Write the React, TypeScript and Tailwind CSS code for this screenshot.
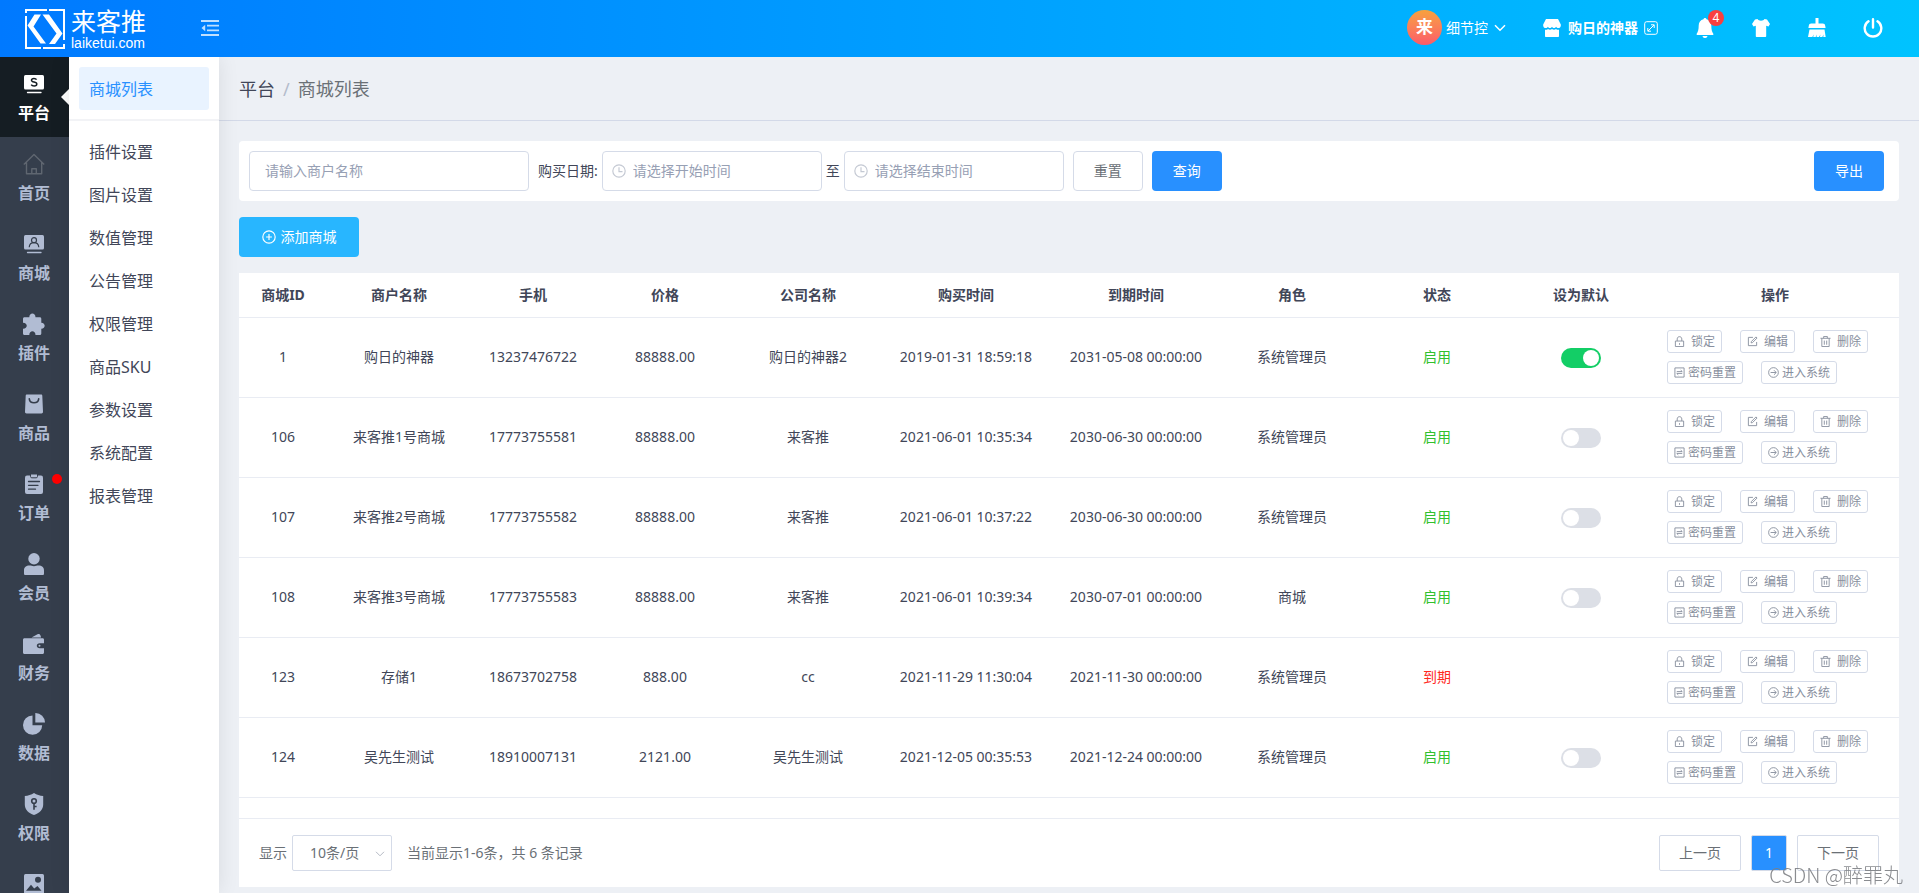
import { useState } from 'react';
import type { ReactNode } from 'react';

type Store = {
  id: number;
  name: string;
  phone: string;
  price: string;
  company: string;
  boughtAt: string;
  expiresAt: string;
  role: string;
  active: boolean;
};

const stores: Store[] = [
  { id: 1, name: '购日的神器', phone: '13237476722', price: '88888.00', company: '购日的神器2', boughtAt: '2019-01-31 18:59:18', expiresAt: '2031-05-08 00:00:00', role: '系统管理员', active: true },
  { id: 106, name: '来客推1号商城', phone: '17773755581', price: '88888.00', company: '来客推', boughtAt: '2021-06-01 10:35:34', expiresAt: '2030-06-30 00:00:00', role: '系统管理员', active: true },
  { id: 107, name: '来客推2号商城', phone: '17773755582', price: '88888.00', company: '来客推', boughtAt: '2021-06-01 10:37:22', expiresAt: '2030-06-30 00:00:00', role: '系统管理员', active: true },
  { id: 108, name: '来客推3号商城', phone: '17773755583', price: '88888.00', company: '来客推', boughtAt: '2021-06-01 10:39:34', expiresAt: '2030-07-01 00:00:00', role: '商城', active: true },
  { id: 123, name: '存储1', phone: '18673702758', price: '888.00', company: 'cc', boughtAt: '2021-11-29 11:30:04', expiresAt: '2021-11-30 00:00:00', role: '系统管理员', active: false },
  { id: 124, name: '吴先生测试', phone: '18910007131', price: '2121.00', company: '吴先生测试', boughtAt: '2021-12-05 00:35:53', expiresAt: '2021-12-24 00:00:00', role: '系统管理员', active: true },
];

const columns = [
  { title: '商城ID', width: 'w-[88px]' },
  { title: '商户名称', width: 'w-[144px]' },
  { title: '手机', width: 'w-[124px]' },
  { title: '价格', width: 'w-[140px]' },
  { title: '公司名称', width: 'w-[146px]' },
  { title: '购买时间', width: 'w-[170px]' },
  { title: '到期时间', width: 'w-[170px]' },
  { title: '角色', width: 'w-[142px]' },
  { title: '状态', width: 'w-[148px]' },
  { title: '设为默认', width: 'w-[140px]' },
  { title: '操作', width: 'w-[248px]' },
];

const subMenu = ['插件设置', '图片设置', '数值管理', '公告管理', '权限管理', '商品SKU', '参数设置', '系统配置', '报表管理'];

// Solid 22px icons of the main menu
const navItems: { label: string; icon: ReactNode; dot?: boolean }[] = [
  {
    label: '平台',
    icon: (
      <>
        <rect x="1" y="2" width="20" height="14.5" rx="1.5" fill="currentColor" />
        <path d="M13.6 6.6c-.5-.8-1.4-1.2-2.6-1.2-1.4 0-2.500.6-2.500 1.800 0 2.600 5.300 1.200 5.300 3.900 0 1.300-1.200 2-2.700 2-1.400 0-2.400-.5-2.900-1.400" fill="none" stroke="#151d23" strokeWidth="1.5" />
        <path d="M4.500 19.500h13.500" stroke="currentColor" strokeWidth="1.300" strokeLinecap="round" />
      </>
    ),
  },
  {
    label: '首页',
    icon: (
      <path
        d="M.8 11.500 11 1.500l10.200 10M3.500 9.500v11.200h15.200V9.500M8.800 20.500v-4.700h4.500v4.700"
        fill="none"
        stroke="#5f6670"
        strokeWidth="1.400"
        strokeLinejoin="round"
      />
    ),
  },
  {
    label: '商城',
    icon: (
      <>
        <rect x="1" y="2" width="20" height="14.500" rx="1.500" fill="currentColor" />
        <circle cx="11" cy="7.200" r="2.500" fill="none" stroke="#353e4c" strokeWidth="1.200" />
        <path d="M6.200 14.300c.2-3 2-4.600 4.800-4.600s4.600 1.600 4.800 4.600" fill="none" stroke="#353e4c" strokeWidth="1.200" />
        <path d="M4.500 19.500h13.500" stroke="currentColor" strokeWidth="1.300" strokeLinecap="round" />
      </>
    ),
  },
  {
    label: '插件',
    icon: (
      <path
        d="M6.300 4.200c0-5 6.200-5 6.200 0h4.300c.9 0 1.500.6 1.500 1.500v4c4.500 0 4.500 6 0 6v4.800c0 .9-.6 1.500-1.500 1.500h-4.300c0-5-6.200-5-6.200 0H1.500C.6 22 0 21.400 0 20.500v-4.800c5 0 5-6 0-6v-4c0-.9.6-1.500 1.500-1.500z"
        fill="currentColor"
      />
    ),
  },
  {
    label: '商品',
    icon: (
      <>
        <path d="M4 1.500h14c.8 0 1.300.5 1.300 1.300l.7 16c0 1-.6 1.700-1.500 1.700h-15c-.9 0-1.500-.7-1.500-1.700l.7-16c0-.8.5-1.300 1.300-1.300z" fill="currentColor" />
        <path d="M6.300 5.800c.5 5.200 8.900 5.200 9.400 0" fill="none" stroke="#353e4c" strokeWidth="1.600" strokeLinecap="round" />
      </>
    ),
  },
  {
    label: '订单',
    dot: true,
    icon: (
      <>
        <rect x="2" y="2.500" width="18" height="18.500" rx="2" fill="currentColor" />
        <path d="M7.500 1h7v2.500c0 .8-.5 1.300-1.300 1.300H8.800c-.8 0-1.300-.5-1.300-1.300z" fill="currentColor" stroke="#353e4c" strokeWidth="1" />
        <path d="M5.500 8.500h11M5.500 12.300h9.500M5.500 16.200h7" stroke="#353e4c" strokeWidth="1.300" strokeLinecap="round" />
      </>
    ),
  },
  {
    label: '会员',
    icon: (
      <>
        <circle cx="11" cy="5.800" r="5.700" fill="currentColor" />
        <path d="M1 20.500v-3c0-3.500 2.200-5 5.500-5 1.500 0 2.800.7 4.500.7s3-.7 4.500-.7c3.300 0 5.500 1.500 5.500 5v3c0 1-.5 1.500-1.500 1.500h-17c-1 0-1.500-.5-1.500-1.500z" fill="currentColor" />
      </>
    ),
  },
  {
    label: '财务',
    icon: (
      <>
        <path d="m8.500 4.500 6-3.200c1.500-.8 2.600 0 3 1.200l.6 2z" fill="currentColor" />
        <path d="M1.500 5.300h18c1 0 1.500.6 1.500 1.500v3.500h-4.200c-4 0-4 5 0 5H21v4.200c0 .9-.6 1.500-1.500 1.500h-18c-.9 0-1.500-.6-1.500-1.500V6.800c0-.9.6-1.500 1.500-1.500z" fill="currentColor" />
        <circle cx="16.500" cy="12.700" r="1" fill="currentColor" />
      </>
    ),
  },
  {
    label: '数据',
    icon: (
      <>
        <path d="M9.500 2.500v9.700h9.700A9.600 9.600 0 1 1 9.500 2.500z" fill="currentColor" />
        <path d="M12.300 0A9.600 9.600 0 0 1 22 9.500h-9.700z" fill="currentColor" />
      </>
    ),
  },
  {
    label: '权限',
    icon: (
      <>
        <path d="M11 0c2.800 1.800 5.800 2.700 9.200 3v8.500c0 5.200-3.600 8.600-9.200 10.500-5.600-1.900-9.200-5.300-9.200-10.500V3C5.200 2.700 8.200 1.800 11 0z" fill="currentColor" />
        <circle cx="11" cy="8" r="2.300" fill="none" stroke="#353e4c" strokeWidth="1.600" />
        <path d="M11 10.300v6.400M11 13.500h2.600" stroke="#353e4c" strokeWidth="1.600" />
      </>
    ),
  },
  {
    label: '图片',
    icon: (
      <>
        <rect x="1" y="1" width="20" height="20" rx="1.500" fill="currentColor" />
        <circle cx="15" cy="6.800" r="3" fill="#353e4c" />
        <path d="m3 17.800 5-6 3.200 3.800 3.300-2.600 4 4.800z" fill="#353e4c" />
      </>
    ),
  },
];

function LineIcon({ children, className = 'size-3' }: { children: ReactNode; className?: string }) {
  return (
    <svg viewBox="0 0 12 12" className={className} fill="none" stroke="currentColor" strokeWidth="1" aria-hidden="true">
      {children}
    </svg>
  );
}

const actions = [
  {
    label: '锁定',
    icon: <path d="M1.500 5.500h9v6h-9zM3.500 5.500V3.200c0-3.300 5-3.300 5 0v2.300M6 7.800v1.800" />,
  },
  {
    label: '编辑',
    icon: <path d="M6.500 1.500h-5v9h9v-4M4.500 7.500l.3-1.500 5-5 1.200 1.200-5 5z" />,
  },
  {
    label: '删除',
    icon: <path d="M.5 2.500h11M4 2.500v-2h4v2M2 2.500v9h8v-9M4.700 5v4.500M7.300 5v4.500" />,
  },
];

const wideActions = [
  {
    label: '密码重置',
    icon: <path d="M1 1h10v10H1zM3 5h6L7.300 3.400M9 7H3l1.700 1.600" />,
  },
  {
    label: '进入系统',
    icon: (
      <>
        <circle cx="6" cy="6" r="5.300" />
        <path d="M2.800 6h6M6.500 3.500 9 6 6.500 8.500" />
      </>
    ),
  },
];

function Header() {
  return (
    <header className="relative z-20 flex h-[57px] shrink-0 items-center justify-between bg-linear-to-r from-[#0079ff] to-[#00c3ff] pr-9 pl-[25px] text-white">
      <div className="flex items-center">
        <svg viewBox="0 0 40 40" className="size-10" aria-hidden="true">
          <path d="M22 1H1v3M1 7v32h15M18 39h21v-4M39 31V1H24" fill="none" stroke="#fff" strokeWidth="2" />
          <path d="M9.500 5.500h6.500L8.500 17.500 21 34.500h-5.500L2.500 16.500z" fill="#fff" />
          <path d="M17.500 5.500H24l13.500 19L30 35h-6l7.500-10.500z" fill="#fff" />
        </svg>
        <div className="ml-1.5 flex flex-col">
          <span className="text-[25px] leading-7">来客推</span>
          <span className="font-['Liberation_Sans',sans-serif] text-[14px] leading-4">laiketui.com</span>
        </div>
        <button type="button" aria-label="收起菜单" className="ml-[55px] pb-0.5 text-white/75">
          <svg viewBox="0 0 18 16" className="h-4 w-[18px]" aria-hidden="true">
            <path d="M0 1h18M6 5.700h12M6 10.300h12M0 15h18" stroke="currentColor" strokeWidth="1.800" />
            <path d="M4.200 4.800v6.400L.5 8z" fill="currentColor" />
          </svg>
        </button>
      </div>

      <div className="flex items-center pb-0.5 text-sm">
        <button type="button" className="flex items-center">
          <span className="flex size-[35px] items-center justify-center rounded-full bg-linear-to-b from-[#f7a13c] to-[#fb5a68] text-[17px] font-bold">来</span>
          <span className="ml-1">细节控</span>
          <svg viewBox="0 0 12 8" className="ml-1.5 h-2 w-3" fill="none" stroke="currentColor" strokeWidth="1.500" aria-hidden="true">
            <path d="m1 1.200 5 5 5-5" />
          </svg>
        </button>
        <a href="#store" className="ml-[37px] flex items-center font-bold">
          <svg viewBox="0 0 18 18" className="size-[18px]" fill="currentColor" aria-hidden="true">
            <path d="M3 0h12l2.800 5.500c.6 4-3.800 4.500-4.700 2.200-.9 1.800-3.300 1.800-4.100 0-.9 1.800-3.300 1.800-4.100 0C4 10-.4 9.500.2 5.500z" />
            <path d="M2 10.800c1.200.2 2.200-.1 3-.8 1.200 1 2.800 1 4 0 1.200 1 2.800 1 4 0 .8.7 1.800 1 3 .8V17c0 .6-.4 1-1 1H3c-.6 0-1-.4-1-1z" />
          </svg>
          <span className="ml-[7px]">购日的神器</span>
          <svg viewBox="0 0 14 14" className="ml-1.5 size-3.5" fill="none" stroke="currentColor" aria-hidden="true">
            <rect x=".7" y=".7" width="12.600" height="12.600" rx="2" />
            <path d="m4 10 6-6M7 3.800h3.200V7M3.800 7v3.200H7" />
          </svg>
        </a>
        <div className="ml-[37px] flex items-center gap-9">
          <button type="button" aria-label="消息" className="relative">
            <svg viewBox="0 0 20 20" className="size-5" fill="currentColor" aria-hidden="true">
              <path d="M10 0c.8 0 1.400.6 1.500 1.300 3 .8 4.800 3 4.800 6.200 0 4 .7 6.500 2 8.200V17H1.700v-1.300c1.300-1.700 2-4.200 2-8.200 0-3.200 1.800-5.400 4.800-6.200C8.600.6 9.200 0 10 0zM7.500 18h5c-.5 2.700-4.500 2.700-5 0z" />
            </svg>
            <span className="absolute -top-2 left-[13px] flex size-4 items-center justify-center rounded-full bg-[#f93f3f] text-xs leading-4">4</span>
          </button>
          <button type="button" aria-label="换肤">
            <svg viewBox="0 0 20 20" className="size-5" fill="currentColor" aria-hidden="true">
              <path d="M6.500 1c1 2.200 6 2.200 7 0L16 1.500l3 4.500-1.500 2.500-2.300-.8V18c0 .6-.4 1-1 1H5.800c-.6 0-1-.4-1-1V7.700l-2.300.8L1 6l3-4.500z" />
            </svg>
          </button>
          <button type="button" aria-label="清除缓存">
            <svg viewBox="0 0 20 20" className="size-5" fill="currentColor" aria-hidden="true">
              <path d="M8.500 0h3v5.500h4.300c1.400 0 2.200.9 2.400 2.200l.4 2.300H1.400l.4-2.300c.2-1.300 1-2.200 2.400-2.200h4.300z" />
              <path d="M2.500 11.500h15l1.200 7.500h-2.400l.2-2.500-1.200 2.500h-2.300l.4-2.500L12 19H9.500l.5-2.500L8.600 19H6.200l.6-2.500L5.300 19H1z" />
            </svg>
          </button>
          <button type="button" aria-label="退出">
            <svg viewBox="0 0 20 20" className="size-5" fill="none" stroke="currentColor" strokeWidth="2.400" strokeLinecap="round" aria-hidden="true">
              <path d="M10 1.200v8.300M5.500 3.300a8.300 8.300 0 1 0 9 0" />
            </svg>
          </button>
        </div>
      </div>
    </header>
  );
}

function MainNav() {
  return (
    <nav className="w-[69px] shrink-0 overflow-hidden bg-[#353e4c]">
      {navItems.map((item, i) => (
        <a
          key={item.label}
          href="#nav"
          className={`relative flex h-20 flex-col items-center pt-4 pr-px text-base font-bold ${i === 0 ? 'bg-[#151d23] text-white' : 'text-[#b1bcd3]'}`}
        >
          <svg viewBox="0 0 22 22" className="size-[22px]" aria-hidden="true">
            {item.icon}
          </svg>
          <span className="mt-1.5 leading-6">{item.label}</span>
          {i === 0 && (
            <svg viewBox="0 0 8 16" className="absolute top-8 right-0 h-4 w-2" aria-hidden="true">
              <path d="M8 0v16L0 8z" fill="#fff" />
            </svg>
          )}
          {item.dot && <span className="absolute top-[17px] left-[52px] size-2.5 rounded-full bg-[#ff0000]" />}
        </a>
      ))}
    </nav>
  );
}

function SubNav() {
  return (
    <nav className="relative z-10 w-[150px] shrink-0 bg-white text-base text-[#414658] shadow-[0_0_20px_rgba(0,0,0,0.09)]">
      <div className="border-b-2 border-[#f2f3f6] px-2.5 pt-2.5 pb-[9px]">
        <a href="#list" className="flex h-[43px] items-center rounded-[3px] bg-[#e9f3ff] px-2.5 text-[#2890ff]">
          商城列表
        </a>
      </div>
      <div className="px-2.5 py-[9px]">
        {subMenu.map((label) => (
          <a key={label} href="#sub" className="flex h-[43px] items-center px-2.5">
            {label}
          </a>
        ))}
      </div>
    </nav>
  );
}

function DateField({ id, placeholder }: { id: string; placeholder: string }) {
  return (
    <div className="relative">
      <LineIcon className="absolute top-[13px] left-[10px] size-[14px] text-[#c4c9d3]">
        <circle cx="6" cy="6" r="5.300" />
        <path d="M6 2.800v3.700h3" />
      </LineIcon>
      <input
        id={id}
        aria-label={placeholder}
        placeholder={placeholder}
        className="h-10 w-[220px] rounded border border-[#d5dbe8] pr-3 pb-0.5 pl-[30px] placeholder:text-[#97a0b4]"
      />
    </div>
  );
}

function SearchBar() {
  return (
    <form className="flex items-center rounded bg-white py-2.5 pr-[15px] pl-2.5" onSubmit={(e) => e.preventDefault()}>
      <input
        aria-label="商户名称"
        placeholder="请输入商户名称"
        className="h-10 w-[280px] rounded border border-[#d5dbe8] px-[15px] pb-0.5 placeholder:text-[#97a0b4]"
      />
      <label htmlFor="start" className="mr-1 ml-[9px]">
        购买日期:
      </label>
      <DateField id="start" placeholder="请选择开始时间" />
      <label htmlFor="end" className="mx-1">
        至
      </label>
      <DateField id="end" placeholder="请选择结束时间" />
      <button type="reset" className="ml-[9px] h-10 w-[70px] rounded border border-[#d5dbe8] text-[#6a7076]">
        重置
      </button>
      <button type="submit" className="ml-[9px] h-10 w-[70px] rounded bg-[#2890ff] text-white">
        查询
      </button>
      <button type="button" className="ml-auto h-10 w-[70px] rounded bg-[#2890ff] text-white">
        导出
      </button>
    </form>
  );
}

function RowActions() {
  return (
    <div className="flex flex-col gap-2 pl-4 text-xs text-[#888f9e]">
      <div className="flex gap-[18px]">
        {actions.map((action) => (
          <button key={action.label} type="button" className="flex h-[23px] w-[55px] items-center justify-center gap-1.5 rounded-[3px] border border-[#d5dbe8]">
            <LineIcon className="size-[11px]">{action.icon}</LineIcon>
            {action.label}
          </button>
        ))}
      </div>
      <div className="flex gap-[18px]">
        {wideActions.map((action) => (
          <button key={action.label} type="button" className="flex h-[23px] w-[76px] items-center justify-center gap-[3px] rounded-[3px] border border-[#d5dbe8]">
            <LineIcon className="size-[11px]">{action.icon}</LineIcon>
            {action.label}
          </button>
        ))}
      </div>
    </div>
  );
}

function StoreTable() {
  const [defaultId, setDefaultId] = useState(1);

  return (
    <table className="w-full table-fixed text-center">
      <thead>
        <tr className="h-11 border-b border-[#e9ecf3]">
          {columns.map((col) => (
            <th key={col.title} className={`${col.width} font-bold`}>
              {col.title}
            </th>
          ))}
        </tr>
      </thead>
      <tbody>
        {stores.map((store) => (
          <tr key={store.id} className="h-20 border-b border-[#e9ecf3]">
            <td>{store.id}</td>
            <td>{store.name}</td>
            <td>{store.phone}</td>
            <td>{store.price}</td>
            <td>{store.company}</td>
            <td>{store.boughtAt}</td>
            <td>{store.expiresAt}</td>
            <td>{store.role}</td>
            <td className={store.active ? 'text-[#30c02d]' : 'text-[#ff2a1f]'}>{store.active ? '启用' : '到期'}</td>
            <td>
              {store.active && (
                <input
                  type="checkbox"
                  role="switch"
                  aria-label={`设为默认 ${store.name}`}
                  checked={defaultId === store.id}
                  onChange={() => setDefaultId(store.id)}
                  className="h-5 w-10 appearance-none rounded-full bg-[#dcdfe6] p-0.5 align-middle before:block before:size-4 before:rounded-full before:bg-white checked:bg-[#13ce66] checked:before:ml-5"
                />
              )}
            </td>
            <td>
              <RowActions />
            </td>
          </tr>
        ))}
      </tbody>
    </table>
  );
}

function Pagination() {
  return (
    <div className="mt-5 flex items-center border-t border-[#e9ecf3] px-5 py-4 text-[#6a7076]">
      <label htmlFor="page-size">显示</label>
      <div className="relative ml-[5px]">
        <select id="page-size" className="h-9 w-[100px] appearance-none rounded-xs border border-[#d5dbe8] bg-white pl-[17px]">
          <option>10条/页</option>
        </select>
        <svg viewBox="0 0 10 6" className="pointer-events-none absolute top-4 right-[7px] h-1.5 w-2.5" fill="none" stroke="#b4b9c4" aria-hidden="true">
          <path d="m1 .8 4 4 4-4" />
        </svg>
      </div>
      <span className="ml-[15px]">当前显示1-6条，共 6 条记录</span>
      <div className="ml-auto flex gap-2.5">
        <button type="button" className="h-9 w-[82px] rounded-xs border border-[#d5dbe8]">
          上一页
        </button>
        <button type="button" className="h-9 w-9 rounded-xs border border-[#d5dbe8] bg-[#2890ff] text-white">
          1
        </button>
        <button type="button" className="h-9 w-[82px] rounded-xs border border-[#d5dbe8]">
          下一页
        </button>
      </div>
    </div>
  );
}

export default function App() {
  return (
    <div className="flex h-screen flex-col overflow-hidden bg-[#edf0f5] font-['Noto_Sans','Noto_Sans_CJK_SC',sans-serif] text-[#414658]">
      <Header />
      <div className="flex min-h-0 flex-1">
        <MainNav />
        <SubNav />
        <main className="min-w-0 flex-1 overflow-y-auto text-sm">
          {/* Breadcrumb */}
          <div className="flex h-16 items-center gap-2 border-b border-[#d3d9e8] px-5 text-lg">
            <a href="#platform">平台</a>
            <span className="text-[#b4bccc]">/</span>
            <span className="text-[#6a7076]">商城列表</span>
          </div>

          <div className="flex flex-col items-stretch gap-4 px-5 pt-5">
            <SearchBar />
            <button type="button" className="flex h-10 w-[120px] items-center justify-center gap-[5px] rounded bg-[#28b6ff] text-white">
              <LineIcon className="size-[14px]">
                <circle cx="6" cy="6" r="5.300" />
                <path d="M6 3.500v5M3.500 6h5" />
              </LineIcon>
              添加商城
            </button>
            <div className="bg-white">
              <StoreTable />
              <Pagination />
            </div>
          </div>
        </main>
      </div>
      <div className="pointer-events-none fixed right-4 bottom-1 z-30 font-['Noto_Sans_CJK_SC',sans-serif] text-xl leading-7 font-light text-[#7d7f84]/90">CSDN @醉罪丸</div>
    </div>
  );
}
